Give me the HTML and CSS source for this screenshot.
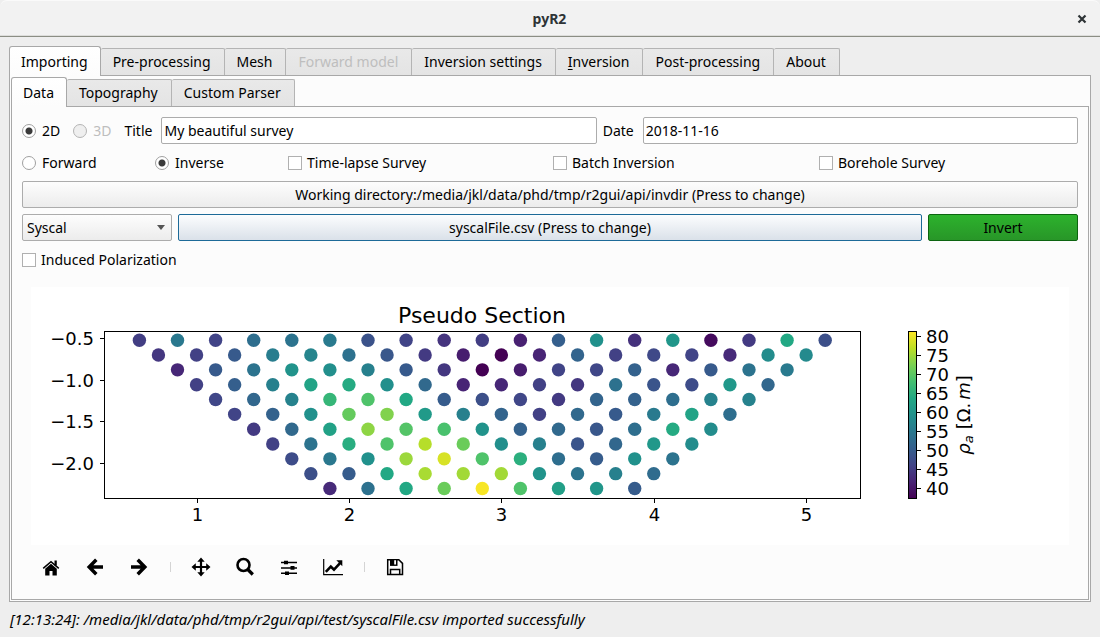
FILE: index.html
```html
<!DOCTYPE html>
<html lang="en">
<head>
<meta charset="utf-8">
<title>pyR2</title>
<link rel="stylesheet" href="styles.css">
</head>
<body>
<div class="window">
  <header class="titlebar">
    <h1 class="title">pyR2</h1>
    <button class="close" type="button" aria-label="Close">
      <svg width="10" height="10" viewBox="0 0 10 10"><path d="M1.5 1.5l7 7M8.500 1.500l-7 7" stroke="#2e3436" stroke-width="2.200" fill="none"/></svg>
    </button>
  </header>

  <main class="main">
    <nav class="tabs tabs-outer">
      <button type="button" class="tab active">Importing</button>
      <button type="button" class="tab">Pre-processing</button>
      <button type="button" class="tab">Mesh</button>
      <button type="button" class="tab" disabled>Forward model</button>
      <button type="button" class="tab">Inversion settings</button>
      <button type="button" class="tab"><span class="mnemonic">I</span>nversion</button>
      <button type="button" class="tab">Post-processing</button>
      <button type="button" class="tab">About</button>
    </nav>
    <div class="panel panel-outer">
      <nav class="tabs tabs-inner">
        <button type="button" class="tab active">Data</button>
        <button type="button" class="tab">Topography</button>
        <button type="button" class="tab">Custom Parser</button>
      </nav>
      <div class="panel panel-inner">
        <form class="form">
          <div class="row survey">
            <label class="radio"><input type="radio" name="dim" checked><span>2D</span></label>
            <label class="radio"><input type="radio" name="dim" disabled><span>3D</span></label>
            <label class="caption" for="title">Title</label>
            <input class="field" id="title" type="text" value="My beautiful survey">
            <label class="caption" for="date">Date</label>
            <input class="field" id="date" type="text" value="2018-11-16">
          </div>
          <div class="options">
            <label class="radio"><input type="radio" name="mode"><span>Forward</span></label>
            <label class="radio"><input type="radio" name="mode" checked><span>Inverse</span></label>
            <label class="check"><input type="checkbox"><span>Time-lapse Survey</span></label>
            <label class="check"><input type="checkbox"><span>Batch Inversion</span></label>
            <label class="check"><input type="checkbox"><span>Borehole Survey</span></label>
          </div>
          <button type="button" class="btn">Working directory:/media/jkl/data/phd/tmp/r2gui/api/invdir (Press to change)</button>
          <div class="row files">
            <div class="combo">
              <select aria-label="File format"><option>Syscal</option></select>
            </div>
            <button type="button" class="btn focused">syscalFile.csv (Press to change)</button>
            <button type="button" class="btn invert">Invert</button>
          </div>
          <div class="options">
            <label class="check"><input type="checkbox"><span>Induced Polarization</span></label>
          </div>
        </form>

        <figure class="figure">
          <svg class="plot" viewBox="0 0 1038 258" role="img" aria-label="Pseudo Section">
            <defs>
              <linearGradient id="viridis" x1="0" y1="1" x2="0" y2="0"></linearGradient>
            </defs>
            <text class="plot-title" x="451" y="36">Pseudo Section</text>
            <g id="points"></g>
            <rect class="axis" x="73.5" y="44.5" width="756" height="167"/>
            <g id="ticks"></g>
            <rect class="axis" x="877.5" y="44.5" width="8" height="167" fill="url(#viridis)" id="bar"/>
            <text class="bar-label" transform="translate(939 128) rotate(-90)"><tspan class="it">ρ</tspan><tspan class="it sub" dy="3">a</tspan><tspan dy="-3" dx="6">[Ω.</tspan><tspan class="it" dx="3">m</tspan><tspan>]</tspan></text>
          </svg>
        </figure>

        <div class="toolbar">
          <button type="button" class="tool" aria-label="Home">
            <svg width="24" height="24" viewBox="0 0 24 24"><path d="M12 8.800l5.800 4.900V20.500h-4.300v-4.500h-3v4.500H6.200v-6.800z"/><path d="M4.200 13.400L12 6.700l7.800 6.700" fill="none" stroke="#000" stroke-width="1.500"/><path d="M15.500 5.500h2.300v5h-2.300z"/></svg>
          </button>
          <button type="button" class="tool" aria-label="Back">
            <svg width="24" height="24" viewBox="0 0 24 24"><path d="M13.300 4.800L6.200 12l7.100 7.200M7 12h13" fill="none" stroke="#000" stroke-width="3.500"/></svg>
          </button>
          <button type="button" class="tool" aria-label="Forward">
            <svg width="24" height="24" viewBox="0 0 24 24"><path d="M10.700 4.800l7.100 7.200-7.100 7.200M17 12H4" fill="none" stroke="#000" stroke-width="3.500"/></svg>
          </button>
          <span class="sep"></span>
          <button type="button" class="tool" aria-label="Pan">
            <svg width="24" height="24" viewBox="0 0 24 24"><path d="M12 2.500l3.700 4.300h-2.600v4.100h4.100V8.300L21.500 12l-4.300 3.700v-2.600h-4.100v4.100h2.600L12 21.500l-3.700-4.300h2.600v-4.100H6.800v2.600L2.500 12l4.300-3.700v2.600h4.100V6.800H8.300z"/></svg>
          </button>
          <button type="button" class="tool" aria-label="Zoom">
            <svg width="24" height="24" viewBox="0 0 24 24"><circle cx="10.500" cy="10" r="6" fill="none" stroke="#000" stroke-width="2.600"/><path d="M14.800 14.500l5 5" fill="none" stroke="#000" stroke-width="3.200"/></svg>
          </button>
          <button type="button" class="tool" aria-label="Subplots">
            <svg width="24" height="24" viewBox="0 0 24 24"><path d="M4 7.500h16M4 12.900h16M4 18.200h16" fill="none" stroke="#000" stroke-width="1.500"/><path d="M7 5.700h4v3.600H7zM13.500 11.100h4v3.600h-4zM8 16.400h4V20H8z"/></svg>
          </button>
          <button type="button" class="tool" aria-label="Edit axis">
            <svg width="24" height="24" viewBox="0 0 24 24"><path d="M2.700 4v15.700H22" fill="none" stroke="#000" stroke-width="1.200"/><path d="M4.800 16.800l5-5.300 3.200 3.200 6.500-7" fill="none" stroke="#000" stroke-width="2.600"/><path d="M15.300 5.200h6v6z"/></svg>
          </button>
          <span class="sep"></span>
          <button type="button" class="tool" aria-label="Save">
            <svg width="24" height="24" viewBox="0 0 24 24"><path d="M4.700 4.700h11.100l3.700 3.700v11.100H4.700zM7.500 19.500v-5h9.200v5" fill="none" stroke="#000" stroke-width="1.500"/><path d="M7 4.500h7.500v6.400H7z"/><path d="M11.200 5.300h1.800v4.200h-1.800z" fill="#fcfcfc"/></svg>
          </button>
        </div>
      </div>
    </div>
  </main>
  <footer class="status">[12:13:24]: /media/jkl/data/phd/tmp/r2gui/api/test/syscalFile.csv imported successfully</footer>
</div>
<script src="plot.js"></script>
</body>
</html>
```
FILE: plot.js
```js
const NS = "http://www.w3.org/2000/svg";
const VIRIDIS = ["#440154", "#482475", "#414487", "#355f8d", "#2a788e", "#21918c",
  "#22a884", "#44bf70", "#7ad151", "#bddf26", "#fde725"];

// Apparent resistivity by depth level, as a percentage of the colour range.
const LEVELS = [
  [18, 40, 20, 36, 38, 41, 25, 20, 15, 18, 9, 30, 50, 14, 52, 3, 17, 60, 24],
  [16, 19, 28, 42, 45, 37, 27, 17, 8, 0, 10, 32, 19, 22, 20, 12, 48, 47],
  [11, 28, 38, 51, 49, 43, 28, 16, 0, 8, 20, 21, 31, 11, 28, 38, 41],
  [19, 30, 43, 58, 61, 49, 34, 10, 11, 19, 16, 37, 26, 23, 53, 33],
  [21, 33, 44, 66, 72, 60, 29, 24, 21, 17, 32, 31, 36, 44, 44],
  [20, 31, 50, 76, 81, 54, 43, 32, 19, 34, 28, 41, 58, 36],
  [17, 34, 57, 83, 73, 71, 51, 31, 34, 27, 36, 61, 48],
  [19, 38, 62, 72, 89, 77, 49, 43, 26, 33, 53, 48],
  [23, 40, 50, 85, 94, 72, 63, 36, 29, 50, 38],
  [24, 29, 60, 87, 86, 86, 51, 38, 43, 35],
  [12, 37, 60, 77, 99, 72, 56, 52, 29]
];

function add(parent, tag, attrs, text) {
  const node = document.createElementNS(NS, tag);
  for (const key in attrs) node.setAttribute(key, attrs[key]);
  if (text !== undefined) node.textContent = text;
  parent.appendChild(node);
}

function colour(percent) {
  const i = Math.min(9, Math.floor(percent / 10));
  const f = percent / 10 - i;
  const part = (hex, k) => parseInt(hex.slice(1 + 2 * k, 3 + 2 * k), 16);
  const mix = [0, 1, 2].map(k =>
    Math.round(part(VIRIDIS[i], k) * (1 - f) + part(VIRIDIS[i + 1], k) * f));
  return `rgb(${mix.join(",")})`;
}

const points = document.getElementById("points");
LEVELS.forEach((level, r) => level.forEach((value, i) => {
  add(points, "circle", {
    cx: 108.4 + 38.1 * i + 19.05 * r, cy: 53.2 + 14.83 * r, r: 6.7, fill: colour(value)
  });
}));

const ticks = document.getElementById("ticks");
[1, 2, 3, 4, 5].forEach((n, i) => {
  const x = Math.floor(166 + 152.4 * i) + 0.5;
  add(ticks, "path", { class: "tick", d: `M${x} 212v4` });
  add(ticks, "text", { class: "label middle", x, y: 234 }, n);
});
["−0.5", "−1.0", "−1.5", "−2.0"].forEach((s, i) => {
  const y = Math.floor(51.5 + 41.6 * i) + 0.5;
  add(ticks, "path", { class: "tick", d: `M73 ${y}h-4` });
  add(ticks, "text", { class: "label end", x: 63, y: y + 6.5 }, s);
});
[80, 75, 70, 65, 60, 55, 50, 45, 40].forEach((n, i) => {
  const y = 49.5 + 19 * i;
  add(ticks, "path", { class: "tick", d: `M886 ${y}h4` });
  add(ticks, "text", { class: "label", x: 895, y: y + 6.5 }, n);
});

const gradient = document.getElementById("viridis");
VIRIDIS.forEach((c, i) => add(gradient, "stop", { offset: i / 10, "stop-color": c }));
```
FILE: styles.css
```css
* { box-sizing: border-box; }
body {
  margin: 0;
  background: #eeeeee;
  color: #000;
  font: 14px/20px "Noto Sans", "Open Sans", sans-serif;
}
button, input, select { font: inherit; color: inherit; margin: 0; }
.window { min-height: 100vh; display: flex; flex-direction: column; }

.titlebar {
  height: 37px;
  display: flex;
  align-items: center;
  padding: 0 13px;
  background: #f2f2f2;
  border-top: 1px solid #fafafa;
  border-bottom: 1px solid #8b8e84;
  box-shadow: inset 0 -1px #dddddb;
  border-radius: 7px 7px 0 0;
}
.title {
  flex: 1;
  margin: 0;
  padding-left: 9px;
  text-align: center;
  font-size: 14px;
  font-weight: 700;
  color: #2e3436;
}
.close { width: 10px; height: 20px; padding: 0; border: 0; background: none; display: flex; align-items: center; }

.main { flex: 1; display: flex; flex-direction: column; padding: 9px 9px 0; }
.tabs { display: flex; align-items: flex-end; }
.tab {
  height: 27px;
  padding: 0 13px 0 12px;
  border: 1px solid #b4b4b4;
  border-left-width: 0;
  border-bottom: 0;
  border-radius: 2px 2px 0 0;
  background: linear-gradient(#e9e9e9, #e4e4e4);
  white-space: nowrap;
}
.tab:disabled { color: #bebebe; }
.tab.active {
  position: relative;
  z-index: 1;
  height: 30px;
  margin-bottom: -1px;
  padding: 0 12px 0 11px;
  border: 1px solid #a8a8a8;
  border-bottom: 0;
  border-radius: 3px 3px 0 0;
  background: linear-gradient(#ffffff, #fcfcfc);
}
.mnemonic { text-decoration: underline; text-underline-offset: 2px; }
.panel { flex: 1; display: flex; flex-direction: column; border: 1px solid #a8a8a8; background: #fcfcfc; }
.panel-outer { padding: 1px; }
.panel-inner { padding: 10px; }

.form { display: flex; flex-direction: column; gap: 6px; }
.row { display: flex; align-items: center; gap: 6px; }
.radio, .check { display: inline-flex; align-items: center; gap: 6px; white-space: nowrap; }
.check { gap: 5px; }
.radio input, .check input {
  appearance: none;
  flex: none;
  width: 14px;
  height: 14px;
  border: 1px solid #b0b0b0;
  background: #fff;
}
.radio input { border-radius: 50%; border-color: #a0a0a0; }
.radio input:checked { background: radial-gradient(circle, #3a3a3a 3px, #fff 4px); }
.radio input:disabled { background: #efefef; border-color: #b4b4b4; }
.radio input:disabled + span { color: #bebebe; }
.survey .radio { margin-right: 7px; }
.caption { margin-right: 3px; }
.field {
  flex: 1;
  min-width: 0;
  height: 27px;
  padding: 0 2px;
  border: 1px solid #acacac;
  border-radius: 2px;
  background: #fff;
}
.options {
  min-height: 25px;
  display: grid;
  grid-template-columns: 133fr 133fr 265fr 266fr 259fr;
  align-items: center;
}
.btn {
  height: 27px;
  padding: 0 6px;
  border: 1px solid #acacac;
  border-radius: 2px;
  background: linear-gradient(#fdfdfd, #ececec);
}
.btn.focused { flex: 1; border-color: #1d6a98; background: linear-gradient(#fcfdfe, #dae1e9); }
.btn.invert { width: 150px; border-color: #0c6410; background: linear-gradient(#2db22d, #289628); }
.combo { position: relative; width: 150px; }
.combo select {
  appearance: none;
  display: block;
  width: 100%;
  height: 27px;
  padding: 0 20px 0 4px;
  border: 1px solid #acacac;
  border-radius: 2px;
  background: linear-gradient(#fdfdfd, #ececec);
}
.combo::after {
  content: "";
  position: absolute;
  right: 7px;
  top: 11px;
  border: 4px solid transparent;
  border-top: 5px solid #555;
  border-bottom: 0;
  pointer-events: none;
}

.figure { margin: 15px 9px 0; background: #fff; }
.plot { display: block; width: 100%; font-family: "DejaVu Sans", sans-serif; }
.plot-title { font-size: 22px; text-anchor: middle; }
.axis { fill: none; stroke: #000; stroke-width: 1; }
#bar { fill: url(#viridis); }
.tick { stroke: #000; stroke-width: 1; }
.label { font-size: 18px; }
.middle { text-anchor: middle; }
.end { text-anchor: end; }
.bar-label { font-size: 18px; text-anchor: middle; }
.it { font-style: italic; }
.sub { font-size: 13px; }

.toolbar { display: flex; align-items: center; gap: 12px; padding: 6px 13px 0; }
.tool { display: flex; align-items: center; justify-content: center; width: 32px; height: 32px; padding: 0; border: 0; background: none; }
.sep { width: 1px; height: 10px; margin: 0 2px 0 3px; background: #d4d4d4; }
.status { padding: 7px 10px 8px; font-size: 15px; font-style: italic; }
```
